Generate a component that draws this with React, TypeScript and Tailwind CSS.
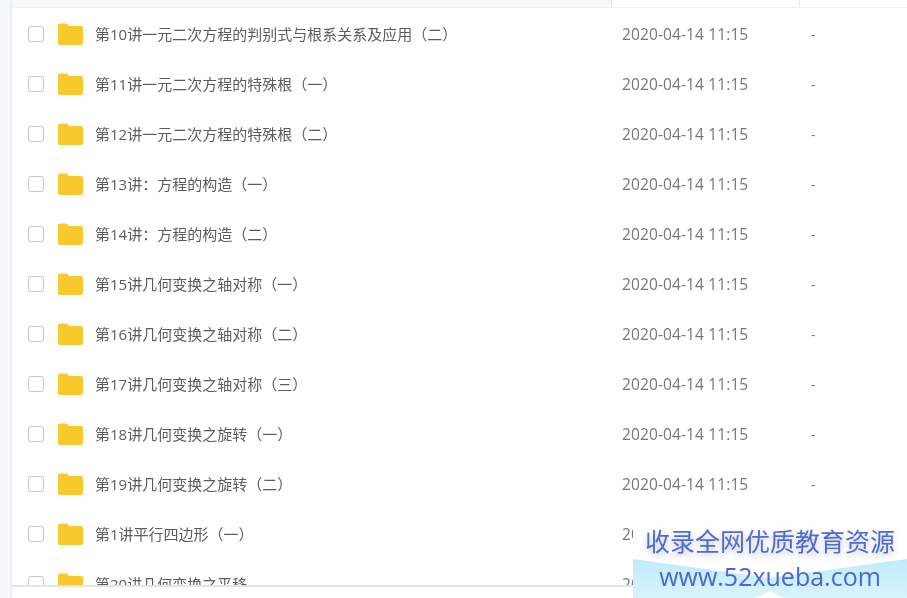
const rows = [
  "第10讲一元二次方程的判别式与根系关系及应用（二）",
  "第11讲一元二次方程的特殊根（一）",
  "第12讲一元二次方程的特殊根（二）",
  "第13讲：方程的构造（一）",
  "第14讲：方程的构造（二）",
  "第15讲几何变换之轴对称（一）",
  "第16讲几何变换之轴对称（二）",
  "第17讲几何变换之轴对称（三）",
  "第18讲几何变换之旋转（一）",
  "第19讲几何变换之旋转（二）",
  "第1讲平行四边形（一）",
  "第20讲几何变换之平移",
];

function Folder() {
  return (
    <svg width="25" height="22" viewBox="0 0 25 22" className="shrink-0">
      <path d="M0 2.5A2 2 0 0 1 2 .5h6.2a2 2 0 0 1 1.5.7L11 3H23a2 2 0 0 1 2 2v15a2 2 0 0 1-2 2H2a2 2 0 0 1-2-2Z" fill="#F8C92C" />
    </svg>
  );
}

function Row({ name }: { name: string }) {
  return (
    <div className="flex h-[50px] shrink-0 items-center">
      <div className="ml-[16px] h-[16px] w-[16px] shrink-0 rounded-[3px] border-[1.5px] border-[#c6c6c6] bg-white" />
      <div className="ml-[14px] w-[37px] shrink-0"><Folder /></div>
      <div className="w-[527px] shrink-0 truncate text-[15px] text-[#5c5c5c]">{name}</div>
      <div className="w-[189px] shrink-0 pt-[1px] text-[15.5px] tracking-[0.12px] text-[#777777]">2020-04-14 11:15</div>
      <div className="text-[14px] text-[#777777]">-</div>
    </div>
  );
}

export default function App() {
  return (
    <div
      className="relative flex h-[598px] w-[907px] overflow-hidden bg-white [filter:blur(0.35px)]"
      style={{ fontFamily: '"Open Sans", "Noto Sans CJK SC", sans-serif' }}
    >
      <div className="h-full w-[10px] shrink-0 bg-[#f7f8fa]" />
      <div className="h-full w-[2px] shrink-0 bg-[#eceef1]" />
      <div className="flex min-w-0 flex-1 flex-col">
        <div className="flex h-[8px] shrink-0 border-b border-[#f1f2f4] bg-[#f8f9fb]">
          <div className="w-[599px] shrink-0" />
          <div className="w-[188px] border-l border-[#e6e7ea] bg-white" />
          <div className="flex-1 border-l border-[#e6e7ea] bg-white" />
        </div>
        <div className="h-[577px] overflow-hidden pt-[1px]">
          <div className="flex flex-col">
            {rows.map((r) => <Row key={r} name={r} />)}
          </div>
        </div>
        <div className="h-[13px] shrink-0 border-t-2 border-[#e4e4e4] bg-white" />
      </div>

      <div className="absolute bottom-0 right-0 flex h-[78px] w-[274px] flex-col items-center">
        <svg className="absolute inset-0" width="274" height="78" viewBox="0 0 274 78">
          <defs>
            <linearGradient id="wm" x1="0" x2="0" y1="0" y2="1">
              <stop offset="0" stopColor="#c0ebfb" />
              <stop offset="1" stopColor="#d8f3fd" />
            </linearGradient>
          </defs>
          <path d="M0 0H274V39L137 58 0 39Z" fill="#ffffff" />
          <path d="M0 39 137 58 274 39V78H152L137 71 122 78H0Z" fill="url(#wm)" />
        </svg>
        <div className="relative mt-[6px] whitespace-nowrap text-[25px] leading-[30px] text-[#4f6bd0] [text-shadow:0_3px_6px_rgba(80,90,140,0.35)]">收录全网优质教育资源</div>
        <div className="relative mt-[5px] whitespace-nowrap text-[25px] leading-[30px] text-[#4a66d2]">www.52xueba.com</div>
      </div>
    </div>
  );
}
